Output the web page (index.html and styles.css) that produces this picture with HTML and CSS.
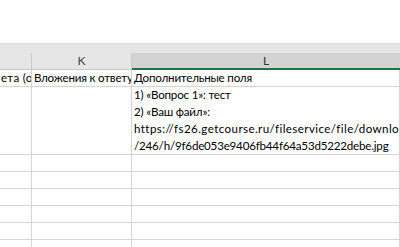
FILE: index.html
```html
<!DOCTYPE html>
<html lang="ru">
<head>
    <meta charset="UTF-8">
    <meta name="viewport" content="width=device-width, initial-scale=1.0">
    <title>Лист</title>
    <link rel="stylesheet" href="styles.css">
</head>
<body>
    <div class="top"></div>
    <div class="strip"></div>
    <div class="sheet">
        <div class="hd"></div>
        <div class="hd">K</div>
        <div class="hd sel">L</div>

        <div class="cell cut">ета (ответа)</div>
        <div class="cell">Вложения к ответу</div>
        <div class="cell">Дополнительные поля</div>

        <div class="cell tall"></div>
        <div class="cell tall"></div>
        <div class="cell tall"><div class="txt">1) «Вопрос 1»: тест
2) «Ваш файл»:
<span class="url">https://fs26.getcourse.ru/fileservice/file/download/a/159346/sc</span>
/246/h/9f6de053e9406fb44f64a53d5222debe.jpg</div></div>

        <div class="cell"></div><div class="cell"></div><div class="cell"></div>
        <div class="cell"></div><div class="cell"></div><div class="cell"></div>
        <div class="cell"></div><div class="cell"></div><div class="cell"></div>
        <div class="cell"></div><div class="cell"></div><div class="cell"></div>
        <div class="cell"></div><div class="cell"></div><div class="cell"></div>
        <div class="cell"></div><div class="cell"></div><div class="cell"></div>
    </div>
</body>
</html>
```

FILE: styles.css
```css
body{
    margin:0;
    width:400px;
    height:247px;
    overflow:hidden;
    background:#fff;
    font-family:"Lato","Liberation Sans",sans-serif;
}
.top{
    height:43px;
}
.strip{
    height:10px;
    background:#e6e6e6;
    border-top:1px solid #dadada;
    box-sizing:border-box;
}
.sheet{
    display:grid;
    grid-template-columns:32px 100px 1fr;
    grid-auto-rows:17px;
}
.hd{
    box-sizing:border-box;
    height:17px;
    background:#e6e6e6;
    border-right:1px solid #c9c9c9;
    border-bottom:1px solid #c9c9c9;
    color:#444;
    font-size:12px;
    line-height:15px;
    text-align:center;
}
.hd.sel{
    background:#d3d3d3;
    border-right:none;
    border-bottom:2px solid #217346;
    color:#333;
}
.cell{
    box-sizing:border-box;
    height:17px;
    border-right:1px solid #d4d4d4;
    border-bottom:1px solid #d4d4d4;
    padding:0 2px;
    font-size:11.6px;
    letter-spacing:-0.2px;
    line-height:16px;
    color:#000;
    white-space:nowrap;
    overflow:hidden;
}
.cell.cut{
    padding:0 0 0 1px;
    letter-spacing:0.3px;
}
.cell.tall{
    height:68px;
    grid-row:span 4;
    display:flex;
    align-items:flex-end;
}
.txt{
    white-space:pre;
    line-height:17px;
}
.url{
    letter-spacing:0.4px;
}
```
